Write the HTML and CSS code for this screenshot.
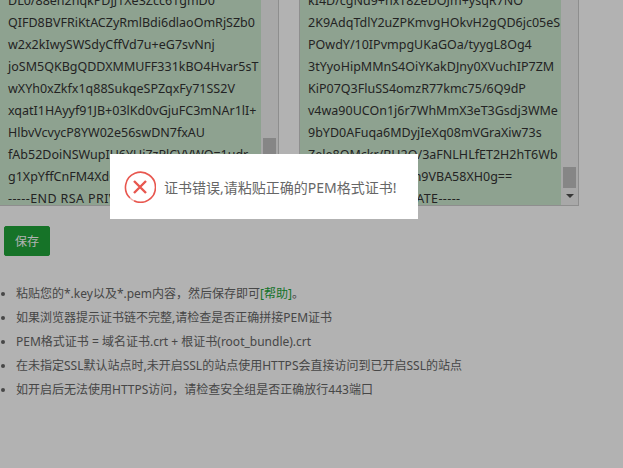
FILE: index.html
```html
<!DOCTYPE html>
<html lang="en">

<head>
    <meta charset="UTF-8">
    <meta name="viewport" content="width=device-width, initial-scale=1.0">
    <title>SSL</title>
    <link rel="stylesheet" href="styles.css">
</head>

<body>
    <div class="cert-row">
        <div class="cert-box cert-key">
            <div class="cert-text">
                <div>DL0/88eh2hqkPDjJ1Xe3Zcc61gmD0</div>
                <div>QIFD8BVFRiKtACZyRmlBdi6dlaoOmRjSZb0</div>
                <div>w2x2kIwySWSdyCffVd7u+eG7svNnj</div>
                <div>joSM5QKBgQDDXMMUFF331kBO4Hvar5sT</div>
                <div>wXYh0xZkfx1q88SukqeSPZqxFy71SS2V</div>
                <div>xqatI1HAyyf91JB+03lKd0vGjuFC3mNAr1lI+</div>
                <div>HlbvVcvycP8YW02e56swDN7fxAU</div>
                <div>fAb52DoiNSWupIU6YUjZzPlCVVWQ=1udr</div>
                <div>g1XpYffCnFM4XdQ2bTn8Lk0vRw==</div>
                <div class="cert-end">-----END RSA PRIVATE KEY-----</div>
            </div>
            <div class="scroll-track">
                <div class="scroll-thumb thumb-key"></div>
                <div class="scroll-arrow"></div>
            </div>
        </div>
        <div class="cert-box">
            <div class="cert-text">
                <div>kI4D/cgNd9+nxT8ZeDOJm+ysqR7NO</div>
                <div>2K9AdqTdlY2uZPKmvgHOkvH2gQD6jc05eS</div>
                <div>POwdY/10IPvmpgUKaGOa/tyygL8Og4</div>
                <div>3tYyoHipMMnS4OiYKakDJny0XVuchIP7ZM</div>
                <div>KiP07Q3FluSS4omzR77kmc75/6Q9dP</div>
                <div>v4wa90UCOn1j6r7WhMmX3eT3Gsdj3WMe</div>
                <div>9bYD0AFuqa6MDyjIeXq08mVGraXiw73s</div>
                <div>Zele8OMckr/BH2Q/3aFNLHLfET2H2hT6Wb</div>
                <div>c1Rt7PqWn5Yk2Lm9VBA58XH0g==</div>
                <div class="cert-end">-----END CERTIFICATE-----</div>
            </div>
            <div class="scroll-track">
                <div class="scroll-thumb"></div>
                <div class="scroll-arrow"></div>
            </div>
        </div>
    </div>

    <button class="save-btn" type="button">保存</button>

    <ul class="help-list">
        <li>粘贴您的*.key以及*.pem内容，然后保存即可<a href="#">[帮助]</a>。</li>
        <li>如果浏览器提示证书链不完整,请检查是否正确拼接PEM证书</li>
        <li>PEM格式证书 = 域名证书.crt + 根证书(root_bundle).crt</li>
        <li>在未指定SSL默认站点时,未开启SSL的站点使用HTTPS会直接访问到已开启SSL的站点</li>
        <li>如开启后无法使用HTTPS访问，请检查安全组是否正确放行443端口</li>
    </ul>

    <div class="shade"></div>

    <div class="msg">
        <svg class="msg-icon" width="32" height="32" viewBox="0 0 32 32">
            <path d="M6 27 A15 15 0 1 1 10 29.8" fill="none" stroke="#e8574f" stroke-width="1.6" />
            <path d="M10 29.8 A15 15 0 0 1 6 27" fill="none" stroke="#f3b0aa" stroke-width="1.2" />
            <path d="M10 10 L22 22 M22 10 L10 22" stroke="#e8574f" stroke-width="2.4" />
        </svg>
        <span>证书错误,请粘贴正确的PEM格式证书!</span>
    </div>
</body>

</html>
```

FILE: styles.css
```css
html,
body {
    height: 100%;
    overflow: hidden;
}

body {
    margin: 0;
    background-color: #fff;
    color: #666;
    font-family: "Noto Sans", "Noto Sans CJK SC", sans-serif;
    font-size: 12px;
}

.cert-row {
    display: flex;
    gap: 20px;
    margin: -11px 0 0 -1px;
}

.cert-box {
    display: flex;
    width: 280px;
    height: 217px;
    box-sizing: border-box;
    border: 1px solid #ccc;
    background-color: #cce8cf;
    overflow: hidden;
}

.cert-text {
    flex: 1;
    padding-left: 8px;
    color: #333;
    font-size: 12.5px;
    line-height: 22px;
    white-space: nowrap;
    overflow: hidden;
}

.cert-end {
    letter-spacing: 0.4px;
}

.scroll-track {
    display: flex;
    flex-direction: column;
    justify-content: flex-end;
    align-items: center;
    width: 17px;
    background-color: #f1f1f1;
}

.scroll-thumb {
    width: 13px;
    height: 21px;
    background-color: #c1c1c1;
}

.thumb-key {
    margin-bottom: 29px;
}

.scroll-arrow {
    width: 0;
    height: 0;
    margin: 6px 0 7px;
    border-style: solid;
    border-width: 4px 4px 0;
    border-color: #505050 transparent transparent;
}

.save-btn {
    display: block;
    width: 46px;
    height: 30px;
    margin: 20px 0 0 4px;
    padding: 0;
    border: 1px solid #20a53a;
    border-radius: 2px;
    background-color: #20a53a;
    color: #fff;
    font-family: inherit;
    font-size: 12px;
}

.help-list {
    margin: 26px 0 0;
    padding: 0 0 0 16px;
    line-height: 24px;
}

.help-list a {
    color: #20a53a;
    text-decoration: none;
}

.shade {
    position: fixed;
    top: 0;
    left: 0;
    width: 100%;
    height: 100%;
    background-color: rgba(0, 0, 0, 0.3);
}

.msg {
    position: fixed;
    top: 154px;
    left: 110px;
    display: flex;
    align-items: center;
    gap: 8px;
    box-sizing: border-box;
    width: 308px;
    height: 65px;
    padding-left: 14px;
    background-color: #fff;
    color: #666;
    font-size: 14px;
}

.msg-icon {
    flex: none;
}
```
